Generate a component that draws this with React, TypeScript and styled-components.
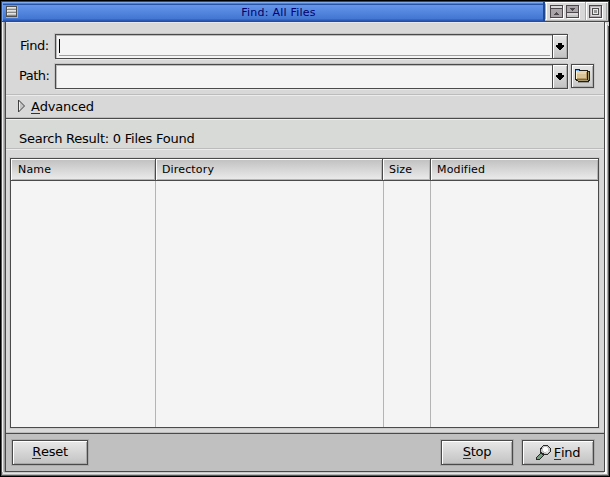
import React from "react";
import styled, { createGlobalStyle } from "styled-components";

const INK = "#4a4a4a";

const Global = createGlobalStyle`
  * { box-sizing: border-box; }
  html, body { margin: 0; background: #000; overflow: hidden; }
  body { font-family: "DejaVu Sans", sans-serif; color: #000; cursor: default; }
  button { font: inherit; color: inherit; margin: 0; padding: 0; border-radius: 0; }
  svg { flex: none; display: block; }
`;

const Frame = styled.main`
  width: 610px;
  height: 477px;
  border: 1px solid #000;
  background: #d8d8d8;
  display: flex;
  flex-direction: column;
`;

const TitleBar = styled.header`
  flex: none;
  height: 21px;
  border: 1px solid #444;
  border-bottom-color: ${INK};
  display: flex;
  background: #d8d8d8;
`;

const TitleTab = styled.div`
  flex: 1;
  display: flex;
  align-items: flex-start;
  padding: 4px 2px 0 3px;
  background: linear-gradient(#80acf4 0 1px, #4e80d6 1px 2px, #2a54a4 2px 3px, #6696ec 3px, #4276d0 17px, #2a58b4 18px);
  border-left: 1px solid #76a4f0;
  border-right: 2px solid #24488e;
`;

const Title = styled.h1`
  flex: 1;
  margin: 0;
  text-align: center;
  font-size: 11px;
  line-height: 14px;
  font-weight: 400;
  letter-spacing: 0.23px;
  color: #00006c;
  padding-right: 2px;
`;

const WindowControls = styled.div`
  flex: none;
  width: 63px;
  display: flex;
`;

const Body = styled.div`
  flex: 1;
  display: flex;
  flex-direction: column;
  margin: 0 4px 4px 4px;
  border: 1px solid ${INK};
  border-top: 0;
  box-shadow:
    -1px 0 #999, -1px 1px #c8c8c8, 1px 1px #fff,
    -2px 0 #b8b8b8, -2px 2px #e4e4e4, 2px 2px #f0f0f0,
    -3px 0 #f4f4f4, -3px 3px #b4b4b4, 3px 3px #aaa,
    -4px 0 #555, -4px 4px #555, 4px 4px #555;
`;

const Fields = styled.section`
  height: 73px;
  padding: 11px 10px 0 0;
  border-top: 1px solid #e8e8e8;
  border-bottom: 1px solid #bcbcbc;
  display: grid;
  grid-template-columns: 49px 513px 23px;
  grid-template-rows: 25px 25px;
  row-gap: 5px;
`;

const Label = styled.label<{ $inset: number }>`
  font-size: 13px;
  line-height: 15px;
  letter-spacing: -0.5px;
  padding: 4px 0 0 ${(p) => p.$inset}px;
`;

const Combo = styled.div`
  border: 1px solid ${INK};
  background: #f4f4f4;
  box-shadow: -1px -1px #c4c4c4, 1px 1px #e8e8e8, inset 1px 1px #bcbcbc;
  display: flex;
`;

const Entry = styled.div<{ $focused?: boolean }>`
  flex: 1;
  margin: 4px 2px 2px 3px;
  border-bottom: 1px solid ${(p) => (p.$focused ? "#9898e0" : "transparent")};
`;

const Caret = styled.div`
  width: 1px;
  height: 14px;
  background: #000;
`;

const raised = `
  background: linear-gradient(#e8e8e8, #c2c2c2);
  box-shadow: inset 1px 1px #fff, inset -1px -1px #b0b0b0;
`;

const Drop = styled.button`
  ${raised}
  width: 15px;
  border: 0;
  border-left: 1px solid ${INK};
  display: flex;
  align-items: center;
  justify-content: center;
`;

const BrowseButton = styled.button`
  background: linear-gradient(#e8e8e8, #c8c8c8);
  box-shadow: inset 1px 1px #fff, inset -1px -1px #b0b0b0, 0 0 0 1px #cacaca;
  margin-left: 3px;
  width: 23px;
  height: 24px;
  border: 1px solid ${INK};
  display: flex;
  align-items: center;
  justify-content: center;
`;

const Advanced = styled.section`
  height: 23px;
  border-top: 1px solid #ececec;
  border-bottom: 1px solid #bcbcbc;
  display: flex;
  align-items: flex-start;
  padding: 3px 0 0 12px;
  gap: 5px;
  font-size: 13px;
  line-height: 15px;
  letter-spacing: -0.2px;
`;

const Key = styled.span`
  display: inline-block;
  height: 15px;
  border-bottom: 1px solid #333;
`;

const Status = styled.section`
  height: 31px;
  border-top: 1px solid ${INK};
  border-bottom: 1px solid #bcbcbc;
  box-shadow: inset 0 1px #f0f0f0;
  padding: 12px 0 0 13px;
  font-size: 13px;
  line-height: 15px;
  letter-spacing: -0.24px;
  background: #d8dad8;
`;

const Results = styled.section`
  flex: 1;
  border-top: 1px solid #ececec;
  border-bottom: 1px solid #bcbcbc;
  padding: 8px 5px 4px 4px;
  display: flex;
`;

const Table = styled.div`
  flex: 1;
  border: 1px solid ${INK};
  box-shadow: 0 0 0 1px #cccccc;
  display: flex;
  flex-direction: column;
`;

const HeaderRow = styled.div`
  display: grid;
  grid-template-columns: 145px 227px 48px 1fr;
  height: 22px;
  border-bottom: 1px solid ${INK};
`;

const HeaderCell = styled.div<{ $inset: number }>`
  background: linear-gradient(#c0c0c0, #ececec);
  box-shadow: inset 1px 1px #fff, inset -1px -1px #b4b4b4;
  border-right: 1px solid ${INK};
  padding: 4px 0 0 ${(p) => p.$inset}px;
  font-size: 11px;
  line-height: 14px;
  letter-spacing: 0.15px;
  &:last-child { border-right: 0; }
`;

const BodyRow = styled.div`
  flex: 1;
  display: grid;
  grid-template-columns: 145px 228px 47px 1fr;
  background: #f4f4f4;
`;

const BodyCell = styled.div`
  border-right: 1px solid #b4b4b4;
  &:last-child { border-right: 0; }
`;

const Footer = styled.footer`
  height: 38px;
  border-top: 1px solid ${INK};
  background: #c0c0c0;
  display: flex;
  align-items: flex-start;
  padding: 6px 10px 0 6px;
  gap: 9px;
`;

const Action = styled.button<{ $width: number }>`
  ${raised}
  box-shadow: inset 1px 1px #fff, inset -1px -1px #a8a8a8, 0 0 0 1px #acacac;
  width: ${(p) => p.$width}px;
  height: 25px;
  border: 1px solid ${INK};
  display: flex;
  align-items: flex-start;
  justify-content: center;
  gap: 2px;
  padding-top: 3px;
  font-size: 13px;
  line-height: 15px;
  letter-spacing: -0.25px;
`;

const FindLabel = styled.span`
  padding-top: 1px;
`;

const Spacer = styled.div`
  flex: 1;
`;

const MenuIcon = () => (
  <svg width="12" height="12" shapeRendering="crispEdges">
    <path d="M0 0h12v12H0z" fill="#a0b0d4" />
    <path d="M0 0h11v11H0z" fill="#505050" />
    <path d="M1 1h9v9H1z" fill="#888" />
    <path d="M1 1h9v2H1zM1 4h9v2H1zM1 7h9v2H1z" fill="#e4e4e4" />
    <path d="M2 2h8v1H2zM2 5h8v1H2zM2 8h8v1H2z" fill="#c4c4c4" />
  </svg>
);

const ControlsIcon = () => (
  <svg width="63" height="19" shapeRendering="crispEdges">
    <path d="M0 0h63v19H0z" fill="#d8d8d8" />
    <path d="M0 0h63v1H0zM1 1h1v17H1zM41 1h1v17h-1z" fill="#fff" />
    <path d="M40 0h1v18h-1zM0 2h1v15H0zM61 1h1v18h-1z" fill="#a8a8a8" />
    <path d="M0 18h63v1H0z" fill="#b4b4b4" />
    <path d="M6 4h13v13H6zM22 4h13v13H22zM45 4h13v13H45z" fill="#fff" />
    <path d="M5 3h13v13H5zM21 3h13v13H21zM44 3h13v13H44z" fill="#4c484c" />
    <path d="M6 4h11v2H6zM22 11h11v2H22z" fill="#d8d8d8" />
    <path d="M6 7h11v8H6zM22 4h11v6H22z" fill="#a8a4a8" />
    <path d="M22 13h11v2H22z" fill="#c4c4c4" />
    <path d="M11 10h1v1h1v1h1v1H9v-1h1v-1h1zM25 6h5v1h-1v1h-1v1h-1V8h-1V7h-1z" fill="#4c484c" />
    <path d="M45 4h11v11H45z" fill="#b0acb0" />
    <path d="M46 5h9v9h-9z" fill="#dcdcdc" />
    <path d="M47 6h7v7h-7z" fill="#505050" />
    <path d="M48 7h5v5h-5z" fill="#e8e8e8" />
    <path d="M49 8h3v3h-3z" fill="#989898" />
  </svg>
);

const DropIcon = () => (
  <svg width="8" height="7" shapeRendering="crispEdges">
    <path d="M2 0h4v2h2v2H7v1H6v1H5v1H3V6H2V5H1V4H0V2h2z" fill="#000" />
  </svg>
);

const FolderIcon = () => (
  <svg width="15" height="14" shapeRendering="crispEdges">
    <path d="M0 0h5v1h8v1h2v10h-1v1H3v-1H1v-1H0z" fill="#202018" />
    <path d="M13 3h1v8h-1z" fill="#a09868" />
    <path d="M1 2h11v8H1z" fill="#d8c498" />
    <path d="M1 2h11v3H1z" fill="#e8d4b0" />
    <path d="M1 1h3v1H1z" fill="#78b0f0" />
    <path d="M1 2h1v8H1z" fill="#fff4d0" />
    <path d="M11 3h1v7h-1zM2 9h10v1H2z" fill="#b49860" />
    <path d="M2 10h10v1H2z" fill="#706848" />
    <path d="M3 11h10v1H3z" fill="#a89c78" />
    <path d="M3 13h11v1H3z" fill="#989898" />
  </svg>
);

const Disclosure = () => (
  <svg width="8" height="14">
    <path d="M.5 1L6.5 7L.5 13z" fill="#c4c4c4" stroke="#404040" strokeWidth="1" />
    <path d="M1.5 3v8" stroke="#f0f0f0" strokeWidth="1" />
  </svg>
);

const Magnifier = () => (
  <svg width="16" height="16" shapeRendering="crispEdges">
    <path d="M7 1h5v1h1v1h1v1h1v4h-1v1h-1v1h-1v1H8v1H7v1H6v1H5v1H4v1H0v-3h1v-1h1v-1h1v-1h1v-1h1V9H4V4h1V3h1V2h1z" fill="#282828" />
    <path d="M7 2h5v1h1v1h1v4h-1v1h-1v1H8V9H6V8H5V5h1V3h1z" fill="#c4c4c4" />
    <path d="M8 3h3v1h1v3h-1v1H8V7H7V4h1z" fill="#fff" />
    <path d="M10 7h3v1h-1v1h-2z" fill="#e4e4e4" />
    <path d="M1 13h1v-1h1v-1h1v-1h2v1h1v1H6v1H5v1H4v1H1z" fill="#789c80" />
  </svg>
);

export default function App() {
  return (
    <>
      <Global />
      <Frame>
        <TitleBar>
          <TitleTab>
            <MenuIcon />
            <Title>Find: All Files</Title>
          </TitleTab>
          <WindowControls>
            <ControlsIcon />
          </WindowControls>
        </TitleBar>
        <Body>
          <Fields>
            <Label $inset={14}>Find:</Label>
            <Combo>
              <Entry $focused>
                <Caret />
              </Entry>
              <Drop aria-label="Recent names"><DropIcon /></Drop>
            </Combo>
            <span />
            <Label $inset={13}>Path:</Label>
            <Combo>
              <Entry />
              <Drop aria-label="Recent paths"><DropIcon /></Drop>
            </Combo>
            <BrowseButton aria-label="Browse"><FolderIcon /></BrowseButton>
          </Fields>
          <Advanced>
            <Disclosure />
            <span><Key>A</Key>dvanced</span>
          </Advanced>
          <Status>Search Result: 0 Files Found</Status>
          <Results>
            <Table>
              <HeaderRow>
                <HeaderCell $inset={7}>Name</HeaderCell>
                <HeaderCell $inset={6}>Directory</HeaderCell>
                <HeaderCell $inset={6}>Size</HeaderCell>
                <HeaderCell $inset={6}>Modified</HeaderCell>
              </HeaderRow>
              <BodyRow>
                <BodyCell />
                <BodyCell />
                <BodyCell />
                <BodyCell />
              </BodyRow>
            </Table>
          </Results>
          <Footer>
            <Action $width={76}><span><Key>R</Key>eset</span></Action>
            <Spacer />
            <Action $width={72}><span><Key>S</Key>top</span></Action>
            <Action $width={72}><Magnifier /><FindLabel><Key>F</Key>ind</FindLabel></Action>
          </Footer>
        </Body>
      </Frame>
    </>
  );
}
